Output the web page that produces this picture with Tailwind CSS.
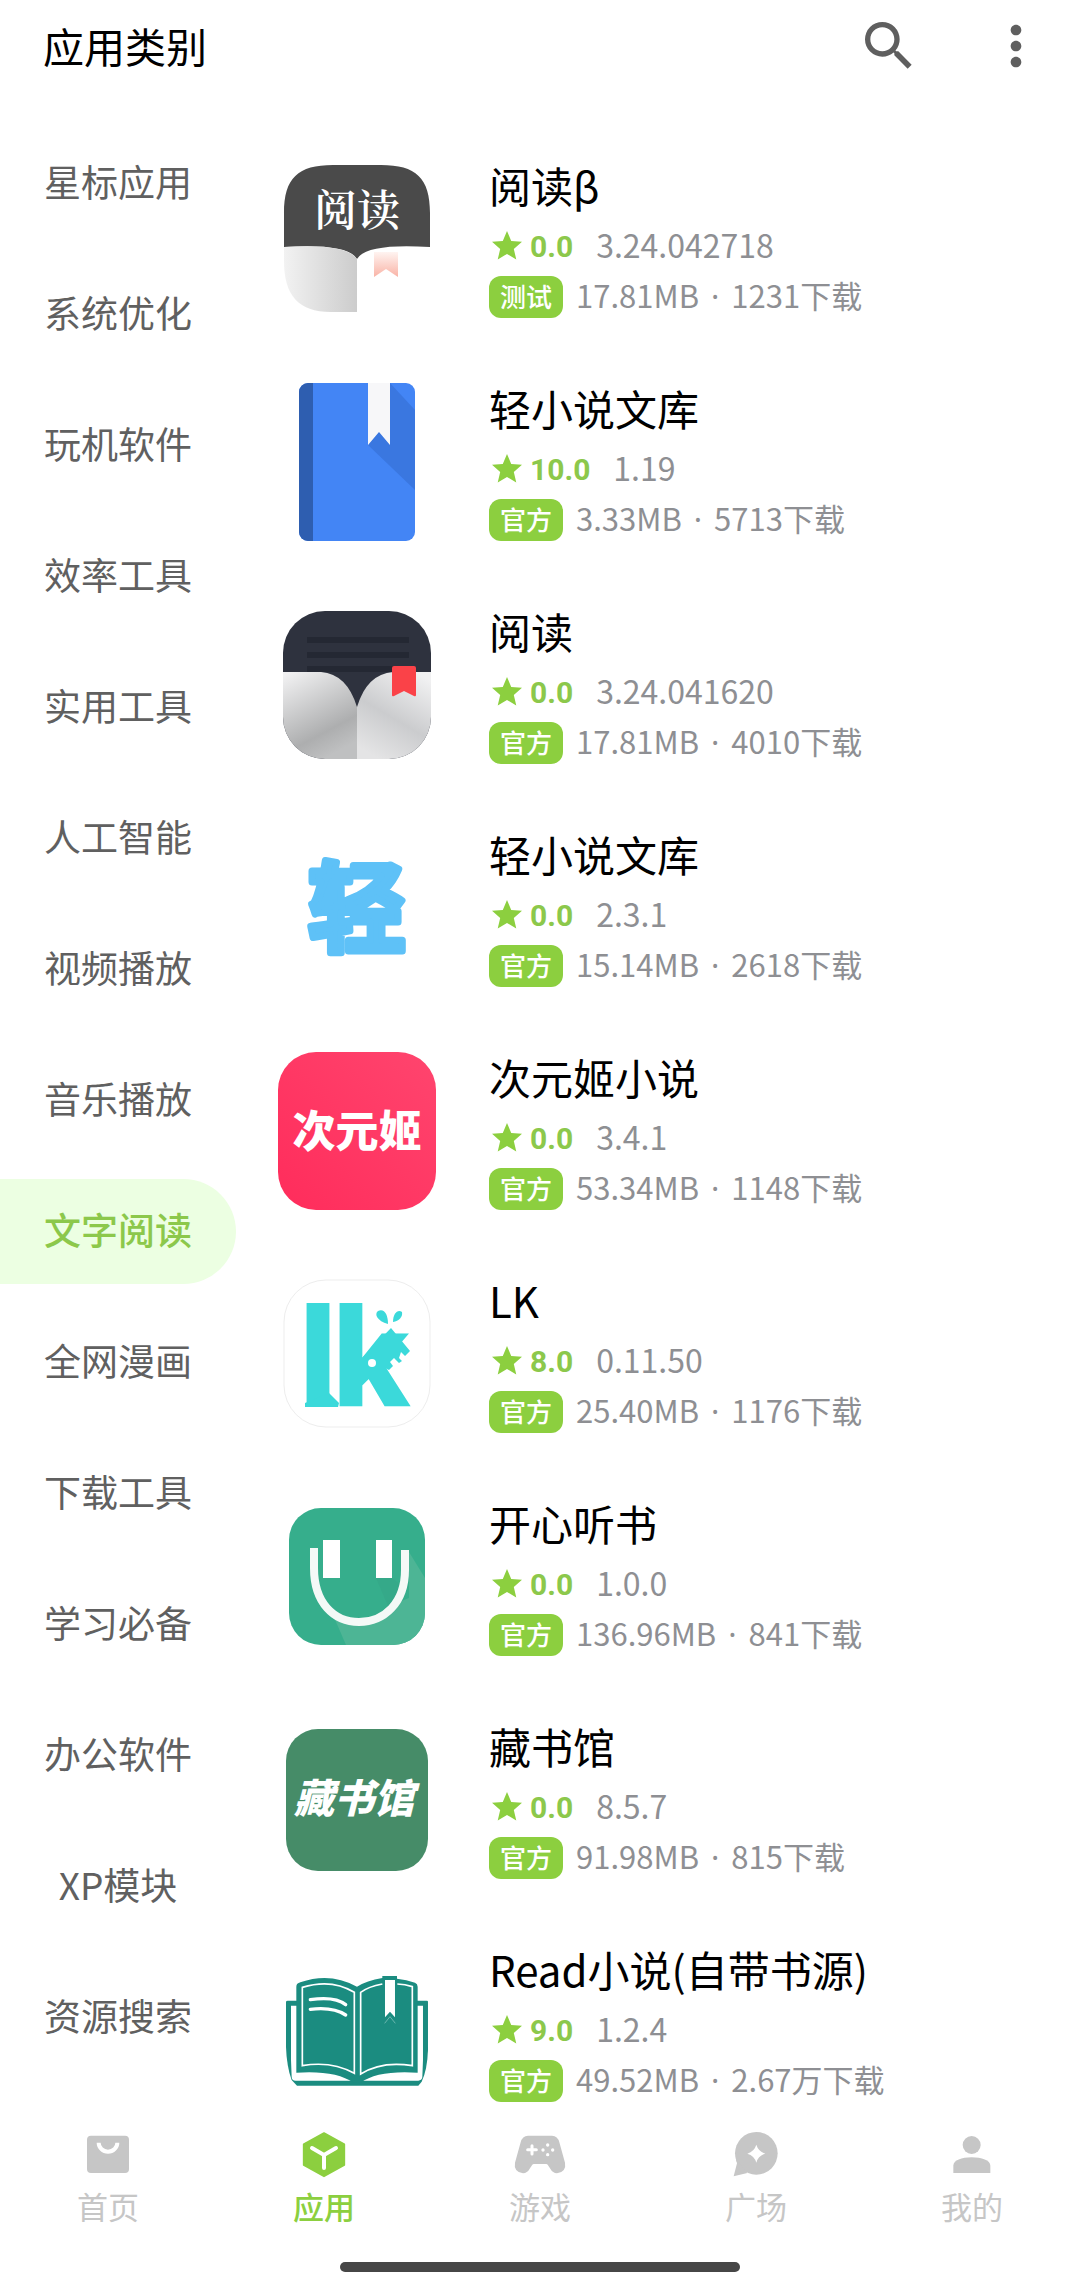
<!DOCTYPE html>
<html lang="zh-CN">
<head>
    <meta charset="UTF-8">
    <meta name="viewport" content="width=device-width, initial-scale=1.0">
    <title>应用类别</title>
    <script src="https://cdn.jsdelivr.net/npm/@tailwindcss/browser@4"></script>
    <script>
        const categories = [
            '星标应用', '系统优化', '玩机软件', '效率工具', '实用工具', '人工智能', '视频播放', '音乐播放',
            '文字阅读', '全网漫画', '下载工具', '学习必备', '办公软件', 'XP模块', '资源搜索'
        ];
        const activeCategory = '文字阅读';

        // All icons share a 158x158 canvas
        const icons = {
            readBeta: `
                <defs>
                    <linearGradient id="beta-page"><stop offset="0" stop-color="#f2f2f2"/><stop offset="1" stop-color="#cccccc"/></linearGradient>
                    <linearGradient id="beta-ribbon" x2="0" y2="1"><stop offset="0" stop-color="#fff4f1"/><stop offset="1" stop-color="#f9b3a6"/></linearGradient>
                </defs>
                <path d="M6 87V53C6 18 20 5 55 5H103C138 5 152 18 152 53V87Q88 83 79 99Q70 83 6 87Z" fill="#4a4a4a"/>
                <path d="M6 87Q68 83 79 99V152H53C20 152 6 135 6 101Z" fill="url(#beta-page)"/>
                <path d="M96 92H120V117L108 109L96 117Z" fill="url(#beta-ribbon)"/>
                <text x="79" y="66" text-anchor="middle" font-family="'Noto Serif CJK SC','Noto Sans CJK SC',serif" font-size="43" font-weight="600" fill="#fff">阅读</text>`,
            blueBook: `
                <clipPath id="book-clip"><rect x="21" width="116" height="158" rx="9"/></clipPath>
                <g clip-path="url(#book-clip)">
                    <rect x="21" width="116" height="158" fill="#4385f5"/>
                    <rect x="21" width="14" height="158" fill="#2e5eb0"/>
                    <path d="M112 0L137 27V107L90 62Z" fill="#3a77e0"/>
                    <path d="M90 0H112V62L101 49L90 62Z" fill="#f7f7f9"/>
                </g>`,
            read: `
                <defs>
                    <linearGradient id="read-left" x1=".1" y1="0" x2=".55" y2="1"><stop offset="0" stop-color="#f1f1f2"/><stop offset=".75" stop-color="#adaeaf"/><stop offset="1" stop-color="#bfc0c1"/></linearGradient>
                    <linearGradient id="read-right" x1=".8" y1="0" x2=".3" y2="1"><stop offset="0" stop-color="#f1f1f2"/><stop offset=".55" stop-color="#cbccce"/><stop offset="1" stop-color="#e4e4e5"/></linearGradient>
                    <clipPath id="read-clip"><rect x="5" y="5" width="148" height="148" rx="42"/></clipPath>
                </defs>
                <g clip-path="url(#read-clip)">
                    <rect x="5" y="5" width="148" height="148" fill="#2e323e"/>
                    <path d="M29 34H131M29 49H131M29 63H131" stroke="#242833" stroke-width="6"/>
                    <path d="M5 66H43Q69 68 79 101V153H5Z" fill="url(#read-left)"/>
                    <path d="M153 66H115Q89 68 79 101V153H153Z" fill="url(#read-right)"/>
                </g>
                <path d="M116 60H136Q138 60 138 62V89Q138 91 136 90L126 85L116 90Q114 91 114 89V62Q114 60 116 60Z" fill="#fa4248"/>`,
            light: `
                <text x="79" y="115" text-anchor="middle" font-family="'Noto Sans CJK SC',sans-serif" font-size="98" font-weight="700" fill="#5ec1f7" stroke="#5ec1f7" stroke-width="7" stroke-linejoin="round">轻</text>`,
            ciyuanji: `
                <linearGradient id="pink" x1="1" y1="0" x2="0" y2="1"><stop offset="0" stop-color="#ff456e"/><stop offset="1" stop-color="#ff2c5b"/></linearGradient>
                <rect width="158" height="158" rx="38" fill="url(#pink)"/>
                <text x="79" y="95" text-anchor="middle" font-family="'Noto Sans CJK SC',sans-serif" font-size="43" font-weight="900" fill="#fff">次元姬</text>`,
            lk: `
                <rect x="6" y="5" width="146" height="147" rx="42" fill="#fff" stroke="#ededed"/>
                <g fill="#3bd9da">
                    <text x="21 55" y="131" font-family="Roboto,sans-serif" font-size="138" font-weight="900">lk</text>
                    <path d="M51 118L61 128L60 132H27V128Z"/>
                    <path d="M113 53L132 76L127 81L123 77L121 83L124 86L121 88L116 83L112 87L115 91L111 95L107 93L101 97L84 83Z"/>
                    <path d="M110 49C99 46 96 39 100 36C106 33 110 39 110 49Z"/>
                    <path d="M115 47C115 38 120 34 124 37C125 42 121 46 115 47Z"/>
                </g>
                <circle cx="94" cy="88" r="4" fill="#fff"/>`,
            happy: `
                <clipPath id="happy-clip"><rect x="11" y="10" width="136" height="137" rx="32"/></clipPath>
                <g clip-path="url(#happy-clip)">
                    <rect x="11" y="10" width="136" height="137" fill="#36ae8c"/>
                    <path d="M62 42L110 108Q90 130 55 117L68 147H147V80L131 54V100L110 108Z" fill="#4db595"/>
                    <path d="M98 80L110 108L127 90L114 80Z" fill="#35a989"/>
                </g>
                <path d="M36 50V70C36 105 56 124 81 124S127 105 127 72V52" fill="none" stroke="#f4f9f7" stroke-width="8"/>
                <path d="M45 42H62V80H45ZM98 42H114V80H98Z" fill="#fff"/>`,
            library: `
                <rect x="8" y="8" width="142" height="142" rx="32" fill="#468c68"/>
                <text x="76" y="92" text-anchor="middle" font-family="'Noto Sans CJK SC',sans-serif" font-size="40" font-weight="900" font-style="italic" fill="#fff">藏书馆</text>`,
            openBook: `
                <g transform="translate(-3 16) scale(.3333)">
                    <path d="M38 122H456Q459 122 459 126V270Q457 330 440 365L430 377H66L50 360Q35 320 33 260V126Q33 122 38 122Z" fill="#1b8c80"/>
                    <path d="M48 137H444V300L442 352Q440 362 430 362H62Q50 362 50 350L48 300Z" fill="#fff"/>
                    <path d="M64 80Q64 70 76 67Q165 35 246 80Q275 62 322 54V48H366V56Q395 59 420 68Q428 71 428 80V338Q310 330 256 368H236Q180 330 64 338Z" fill="#1b8c80"/>
                    <g fill="none" stroke="#fff" stroke-width="5">
                        <path d="M82 82Q170 55 238 97V340Q170 302 82 317Z"/>
                        <path d="M322 72Q280 80 257 97V342Q320 302 412 317V80Q390 73 367 72"/>
                        <path d="M106 119Q180 108 212 134M106 148Q175 140 212 165" stroke-width="10" stroke-linecap="round"/>
                    </g>
                    <path d="M330 60H360V172L345 155L330 172Z" fill="#fff"/>
                    <path d="M329 190L345 170L361 190" fill="none" stroke="#8fcbc4" stroke-width="2"/>
                </g>`
        };

        const apps = [
            { name: '阅读β', score: '0.0', version: '3.24.042718', tag: '测试', size: '17.81MB', downloads: '1231下载', icon: 'readBeta' },
            { name: '轻小说文库', score: '10.0', version: '1.19', tag: '官方', size: '3.33MB', downloads: '5713下载', icon: 'blueBook' },
            { name: '阅读', score: '0.0', version: '3.24.041620', tag: '官方', size: '17.81MB', downloads: '4010下载', icon: 'read' },
            { name: '轻小说文库', score: '0.0', version: '2.3.1', tag: '官方', size: '15.14MB', downloads: '2618下载', icon: 'light' },
            { name: '次元姬小说', score: '0.0', version: '3.4.1', tag: '官方', size: '53.34MB', downloads: '1148下载', icon: 'ciyuanji' },
            { name: 'LK', score: '8.0', version: '0.11.50', tag: '官方', size: '25.40MB', downloads: '1176下载', icon: 'lk' },
            { name: '开心听书', score: '0.0', version: '1.0.0', tag: '官方', size: '136.96MB', downloads: '841下载', icon: 'happy' },
            { name: '藏书馆', score: '0.0', version: '8.5.7', tag: '官方', size: '91.98MB', downloads: '815下载', icon: 'library' },
            { name: 'Read小说(自带书源)', score: '9.0', version: '1.2.4', tag: '官方', size: '49.52MB', downloads: '2.67万下载', icon: 'openBook' }
        ];

        function renderCategories() {
            document.getElementById('categories').innerHTML = categories.map(name => `
                <li>
                    <a href="#" class="flex h-[105px] items-center justify-center rounded-r-full pb-[3px] text-[37px] ${name === activeCategory ? 'bg-[#ecffe2] font-medium text-[#8cc84b]' : 'text-[#606060]'}">${name}</a>
                </li>
            `).join('');
        }

        function renderApps() {
            document.getElementById('apps').innerHTML = apps.map(app => `
                <li>
                    <a href="#" class="flex gap-[53px]">
                        <svg class="size-[158px] shrink-0" viewBox="0 0 158 158" aria-hidden="true">${icons[app.icon]}</svg>
                        <div class="flex min-w-0 flex-col items-start gap-[6px] whitespace-nowrap">
                            <h2 class="pb-[6px] text-[42px] leading-[50px] text-black">${app.name}</h2>
                            <div class="flex h-[48px] items-center">
                                <svg class="size-[36px] text-[#8ccf3f]" viewBox="0 0 24 24" fill="currentColor" aria-hidden="true"><path d="M12 17.27 18.18 21l-1.64-7.03L22 9.24l-7.19-.61L12 2 9.19 8.63 2 9.24l5.46 4.73L5.82 21z"/></svg>
                                <span class="ml-[5px] pt-[2px] font-[Roboto,sans-serif] text-[30px] leading-[44px] font-bold text-[#8cc84b]">${app.score}</span>
                                <span class="ml-[23px] pb-[4px] text-[32px] leading-[44px] text-[#8e8f93]">${app.version}</span>
                            </div>
                            <div class="flex h-[42px] items-center gap-[13px]">
                                <span class="rounded-[12px] bg-[#8ccf3f] px-[11px] pb-[2px] text-[26px] leading-[40px] font-medium text-white">${app.tag}</span>
                                <span class="pb-[4px] text-[31px] leading-[38px] text-[#8e8f93]">${app.size}<span class="mx-[12px] font-['Noto_Sans',sans-serif]">·</span>${app.downloads}</span>
                            </div>
                        </div>
                    </a>
                </li>
            `).join('');
        }

        document.addEventListener('DOMContentLoaded', () => {
            renderCategories();
            renderApps();
        });
    </script>
</head>
<body class="flex min-h-screen flex-col bg-white font-['Noto_Sans_CJK_SC',sans-serif]">
    <header class="flex h-24 items-center pr-[32px] pl-[43px]">
        <h1 class="flex-1 pb-[5px] text-[41px] leading-none text-black">应用类别</h1>
        <button type="button" aria-label="搜索" class="mr-[63px] pb-[5px] text-[#5f5f5f]">
            <svg class="size-[64px]" viewBox="0 0 24 24" fill="currentColor"><path d="M15.5 14h-.79l-.28-.27A6.471 6.471 0 0 0 16 9.5 6.5 6.5 0 1 0 9.5 16c1.61 0 3.09-.59 4.23-1.57l.27.28v.79l5 4.99L20.49 19l-4.99-5zm-6 0C7.01 14 5 11.99 5 9.5S7.01 5 9.5 5 14 7.01 14 9.5 11.99 14 9.5 14z"/></svg>
        </button>
        <button type="button" aria-label="更多" class="pb-[5px] text-[#5f5f5f]">
            <svg class="size-[64px]" viewBox="0 0 24 24" fill="currentColor"><path d="M12 8c1.1 0 2-.9 2-2s-.9-2-2-2-2 .9-2 2 .9 2 2 2zm0 2c-1.1 0-2 .9-2 2s.9 2 2 2 2-.9 2-2-.9-2-2-2zm0 6c-1.1 0-2 .9-2 2s.9 2 2 2 2-.9 2-2-.9-2-2-2z"/></svg>
        </button>
    </header>

    <main class="flex gap-[42px]">
        <!-- Categories -->
        <ul id="categories" class="flex w-[236px] shrink-0 flex-col gap-[26px] pt-[35px]"></ul>

        <!-- App list -->
        <ul id="apps" class="flex min-w-0 flex-1 flex-col gap-[65px] pt-16"></ul>
    </main>

    <footer class="mt-auto pt-[29px] pb-4">
        <nav class="grid grid-cols-5 text-[31px] leading-[38px] text-[#c6c6c6]">
            <a href="#" class="flex flex-col items-center gap-2">
                <svg class="size-[48px]" viewBox="0 0 144 144" fill="currentColor" aria-hidden="true"><rect x="9" y="14" width="126" height="112" rx="12"/><path d="M44 35a28 27 0 0 0 56 0" fill="none" stroke="#fff" stroke-width="12"/></svg>
                首页
            </a>
            <a href="#" class="flex flex-col items-center gap-2 font-medium text-[#8ccf3f]">
                <svg class="size-[48px]" viewBox="0 0 144 144" fill="currentColor" aria-hidden="true"><path d="M72 6L133 40V102L72 136L11 102V40Z" stroke="currentColor" stroke-width="5" stroke-linejoin="round"/><path d="M36 51L72 72L108 51M72 72V111" fill="none" stroke="#fff" stroke-width="12" stroke-linecap="round"/></svg>
                应用
            </a>
            <a href="#" class="flex flex-col items-center gap-2">
                <svg class="size-[48px] overflow-visible" viewBox="0 0 144 144" fill="currentColor" aria-hidden="true"><path d="M36 14H108Q125 14 130 34L147 95Q152 122 123 127Q110 126 104 115L96 103Q94 99 90 99H54Q50 99 48 103L40 115Q34 126 21 127Q-8 122 -3 95L14 34Q19 14 36 14Z"/><path d="M48 44V69M35 56H61" stroke="#fff" stroke-width="9" stroke-linecap="round"/><g fill="#fff"><circle cx="95" cy="42" r="5"/><circle cx="95" cy="71" r="5"/><circle cx="81" cy="57" r="5"/><circle cx="110" cy="57" r="5"/></g></svg>
                游戏
            </a>
            <a href="#" class="flex flex-col items-center gap-2">
                <svg class="size-[48px]" viewBox="0 0 144 144" fill="currentColor" aria-hidden="true"><circle cx="73" cy="67" r="64"/><path d="M11 82L15 97L5 136L46 126Z"/><path d="M73 41Q79 61 100 68Q79 74 73 95Q67 74 46 68Q67 61 73 41Z" fill="#fff"/></svg>
                广场
            </a>
            <a href="#" class="flex flex-col items-center gap-2">
                <svg class="size-[48px]" viewBox="0 0 144 144" fill="currentColor" aria-hidden="true"><circle cx="71" cy="42" r="27"/><path d="M16 126V104C16 88 41 79 71 79S127 88 127 104V126Z"/></svg>
                我的
            </a>
        </nav>
        <div class="mx-auto mt-[37px] h-[10px] w-[37%] rounded-full bg-[#464646]"></div>
    </footer>
</body>
</html>
